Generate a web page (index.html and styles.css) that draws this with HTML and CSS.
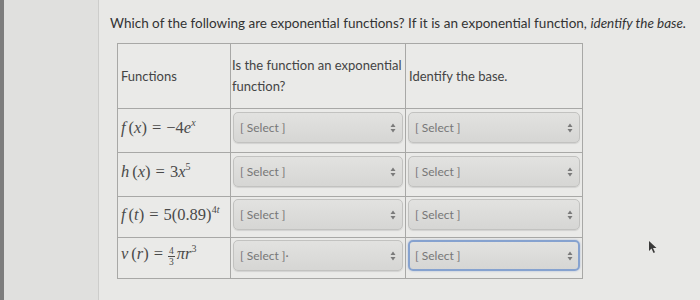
FILE: index.html
```html
<!DOCTYPE html>
<html>
<head>
<meta charset="utf-8">
<link rel="stylesheet" href="styles.css">
</head>
<body>
<div class="edge"></div>
<div class="gutter"></div>
<div class="main">
  <p class="title">Which of the following are exponential functions? If it is an exponential function, <em>identify the base.</em></p>
  <table class="grid">
    <tr class="head">
      <td class="c1">Functions</td>
      <td class="c2">Is the function an exponential function?</td>
      <td class="c3">Identify the base.</td>
    </tr>
    <tr>
      <td class="math"><i>f</i><span class="gap"></span>(<i>x</i>)<span class="eq">=</span>−4<i>e</i><sup><i>x</i></sup></td>
      <td class="sel"><div class="select"><span>[ Select ]</span><svg class="arr" width="6" height="10" viewBox="0 0 6 10"><path d="M3 0.5L5.5 4H0.5Z M3 9.5L5.5 6H0.5Z" fill="#7a7a7a"/></svg></div></td>
      <td class="sel"><div class="select"><span>[ Select ]</span><svg class="arr" width="6" height="10" viewBox="0 0 6 10"><path d="M3 0.5L5.5 4H0.5Z M3 9.5L5.5 6H0.5Z" fill="#7a7a7a"/></svg></div></td>
    </tr>
    <tr>
      <td class="math"><i>h</i><span class="gap"></span>(<i>x</i>)<span class="eq">=</span>3<i>x</i><sup>5</sup></td>
      <td class="sel"><div class="select"><span>[ Select ]</span><svg class="arr" width="6" height="10" viewBox="0 0 6 10"><path d="M3 0.5L5.5 4H0.5Z M3 9.5L5.5 6H0.5Z" fill="#7a7a7a"/></svg></div></td>
      <td class="sel"><div class="select"><span>[ Select ]</span><svg class="arr" width="6" height="10" viewBox="0 0 6 10"><path d="M3 0.5L5.5 4H0.5Z M3 9.5L5.5 6H0.5Z" fill="#7a7a7a"/></svg></div></td>
    </tr>
    <tr class="short">
      <td class="math"><i>f</i><span class="gap"></span>(<i>t</i>)<span class="eq">=</span>5(0.89)<sup>4<i>t</i></sup></td>
      <td class="sel"><div class="select"><span>[ Select ]</span><svg class="arr" width="6" height="10" viewBox="0 0 6 10"><path d="M3 0.5L5.5 4H0.5Z M3 9.5L5.5 6H0.5Z" fill="#7a7a7a"/></svg></div></td>
      <td class="sel"><div class="select"><span>[ Select ]</span><svg class="arr" width="6" height="10" viewBox="0 0 6 10"><path d="M3 0.5L5.5 4H0.5Z M3 9.5L5.5 6H0.5Z" fill="#7a7a7a"/></svg></div></td>
    </tr>
    <tr class="short">
      <td class="math"><i>v</i><span class="gap"></span>(<i>r</i>)<span class="eq">=</span><span class="frac"><span class="num">4</span><span class="den">3</span></span><i>πr</i><sup>3</sup></td>
      <td class="sel"><div class="select"><span>[ Select ]·</span><svg class="arr" width="6" height="10" viewBox="0 0 6 10"><path d="M3 0.5L5.5 4H0.5Z M3 9.5L5.5 6H0.5Z" fill="#7a7a7a"/></svg></div></td>
      <td class="sel"><div class="select focus"><span>[ Select ]</span><svg class="arr" width="6" height="10" viewBox="0 0 6 10"><path d="M3 0.5L5.5 4H0.5Z M3 9.5L5.5 6H0.5Z" fill="#7a7a7a"/></svg></div></td>
    </tr>
  </table>
</div>
<svg class="cursor" width="10" height="14" viewBox="0 0 10 14"><path d="M1 1L1 11L3.5 8.5L5.5 13L7 12.3L5 8H8.5Z" fill="#3a3a3a"/></svg>
</body>
</html>
```
FILE: styles.css
```css
html, body {
  margin: 0;
  padding: 0;
}
body {
  position: relative;
  display: flex;
  width: 700px;
  height: 300px;
  overflow: hidden;
  background: #e6e6e4;
  font-family: Lato, "Open Sans", sans-serif;
  color: #3a3a3a;
}
.edge {
  width: 4px;
  flex: none;
  background: #7d7d7d;
}
.gutter {
  width: 94px;
  flex: none;
  background: #e0e0de;
  border-right: 1px solid #cdcdcb;
}
.main {
  flex: 1;
  padding: 13px 0 0 11px;
  background: #e8e8e6;
}
.title {
  margin: 0;
  font-size: 13.5px;
  line-height: 20px;
  color: #333;
  white-space: nowrap;
}
.title em {
  font-style: italic;
}
.grid {
  margin: 10px 0 0 7px;
  border-collapse: collapse;
  background: #eaeae8;
}
.grid td {
  border: 1px solid #a8a8a6;
  padding: 0 3px;
  font-size: 13px;
  color: #444;
}
.head td {
  height: 64px;
  vertical-align: middle;
  line-height: 21px;
}
.c1 { width: 106px; }
.grid td.c2 { width: 172px; padding: 0 1px; }
.c3 { width: 170px; }
.grid td.sel {
  padding: 3px 2px 9px 2px;
  height: 31px;
}
.grid .short td.sel {
  padding: 2px 2px 7px 2px;
}
.grid td.math {
  padding: 0 0 5px 3px;
  font-family: "Liberation Serif", "DejaVu Serif", serif;
  font-size: 16.5px;
  color: #4a4a4a;
  white-space: nowrap;
}
.math .gap {
  display: inline-block;
  width: 3px;
}
.math .eq {
  margin: 0 5px;
}
.math sup {
  font-size: 10px;
  vertical-align: 7px;
  line-height: 0;
}
.frac {
  display: inline-block;
  vertical-align: -6px;
  font-size: 9.5px;
  line-height: 10px;
  text-align: center;
  margin-right: 2px;
}
.frac .num, .frac .den {
  display: block;
  padding: 0 1px;
}
.frac .num {
  border-bottom: 1px solid #4a4a4a;
}
.select {
  box-sizing: border-box;
  height: 31px;
  display: flex;
  align-items: center;
  justify-content: space-between;
  padding: 0 6px 0 6px;
  border: 1px solid #c2c2c0;
  border-radius: 5px;
  background: linear-gradient(#e2e2e0, #d6d6d4);
  box-shadow: 0 1px 1px rgba(0,0,0,0.1);
  font-family: Lato, sans-serif;
  font-size: 12px;
  color: #777;
}
.select.focus {
  border: 2px solid #86a2cf;
  box-shadow: 0 0 2px rgba(110,140,200,0.6);
  padding: 0 5px;
}
.cursor {
  position: absolute;
  left: 648px;
  top: 240px;
}
```
